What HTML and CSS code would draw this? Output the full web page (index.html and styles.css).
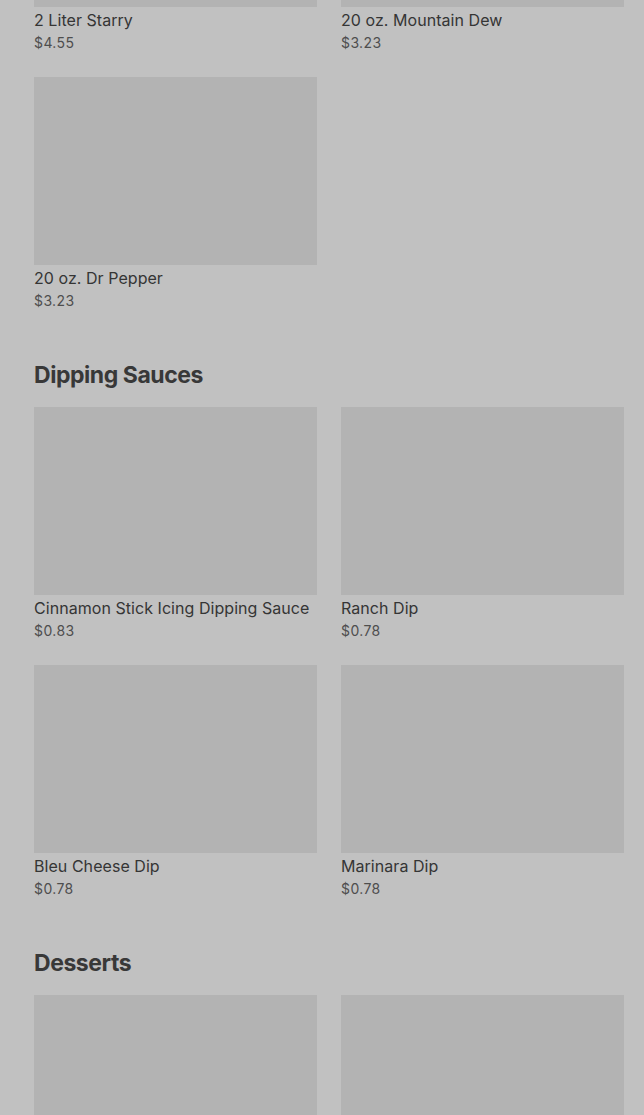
FILE: index.html
```html
<!DOCTYPE html>
<html lang="en">
<head>
<meta charset="utf-8">
<title>Menu</title>
<link rel="stylesheet" href="styles.css">
</head>
<body>
<main class="menu">
  <section class="section section-first">
    <div class="grid">
      <div class="card"><div class="thumb"></div><div class="name">2 Liter Starry</div><div class="price">$4.55</div></div>
      <div class="card"><div class="thumb"></div><div class="name">20 oz. Mountain Dew</div><div class="price">$3.23</div></div>
      <div class="card"><div class="thumb"></div><div class="name">20 oz. Dr Pepper</div><div class="price">$3.23</div></div>
    </div>
  </section>
  <section class="section">
    <h2 class="heading">Dipping Sauces</h2>
    <div class="grid">
      <div class="card"><div class="thumb"></div><div class="name">Cinnamon Stick Icing Dipping Sauce</div><div class="price">$0.83</div></div>
      <div class="card"><div class="thumb"></div><div class="name">Ranch Dip</div><div class="price">$0.78</div></div>
      <div class="card"><div class="thumb"></div><div class="name">Bleu Cheese Dip</div><div class="price">$0.78</div></div>
      <div class="card"><div class="thumb"></div><div class="name">Marinara Dip</div><div class="price">$0.78</div></div>
    </div>
  </section>
  <section class="section">
    <h2 class="heading">Desserts</h2>
    <div class="grid">
      <div class="card"><div class="thumb"></div></div>
      <div class="card"><div class="thumb"></div></div>
    </div>
  </section>
</main>
</body>
</html>
```
FILE: styles.css
```css
html, body {
  margin: 0;
  padding: 0;
  background: #c1c1c1;
  overflow: hidden;
}
body {
  font-family: Inter, "Noto Sans", sans-serif;
  color: #333333;
}
.menu {
  padding: 0 20px 0 34px;
  margin-top: -181px;
}
.section {
  padding-top: 48px;
}
.section-first {
  padding-top: 0;
}
.heading {
  margin: 0 0 16px;
  font-size: 23px;
  line-height: 32px;
  font-weight: 700;
  letter-spacing: -0.45px;
  color: #383838;
}
.grid {
  display: grid;
  grid-template-columns: 283px 283px;
  column-gap: 24px;
  row-gap: 24px;
}
.thumb {
  height: 188px;
  background: #b3b3b3;
}
.name {
  padding-top: 1px;
  font-size: 16px;
  line-height: 24px;
  color: #353535;
  white-space: nowrap;
  letter-spacing: 0.05px;
}
.price {
  padding-top: 1px;
  font-size: 14px;
  line-height: 20px;
  color: #4e4e4e;
  letter-spacing: 0.4px;
}
```
